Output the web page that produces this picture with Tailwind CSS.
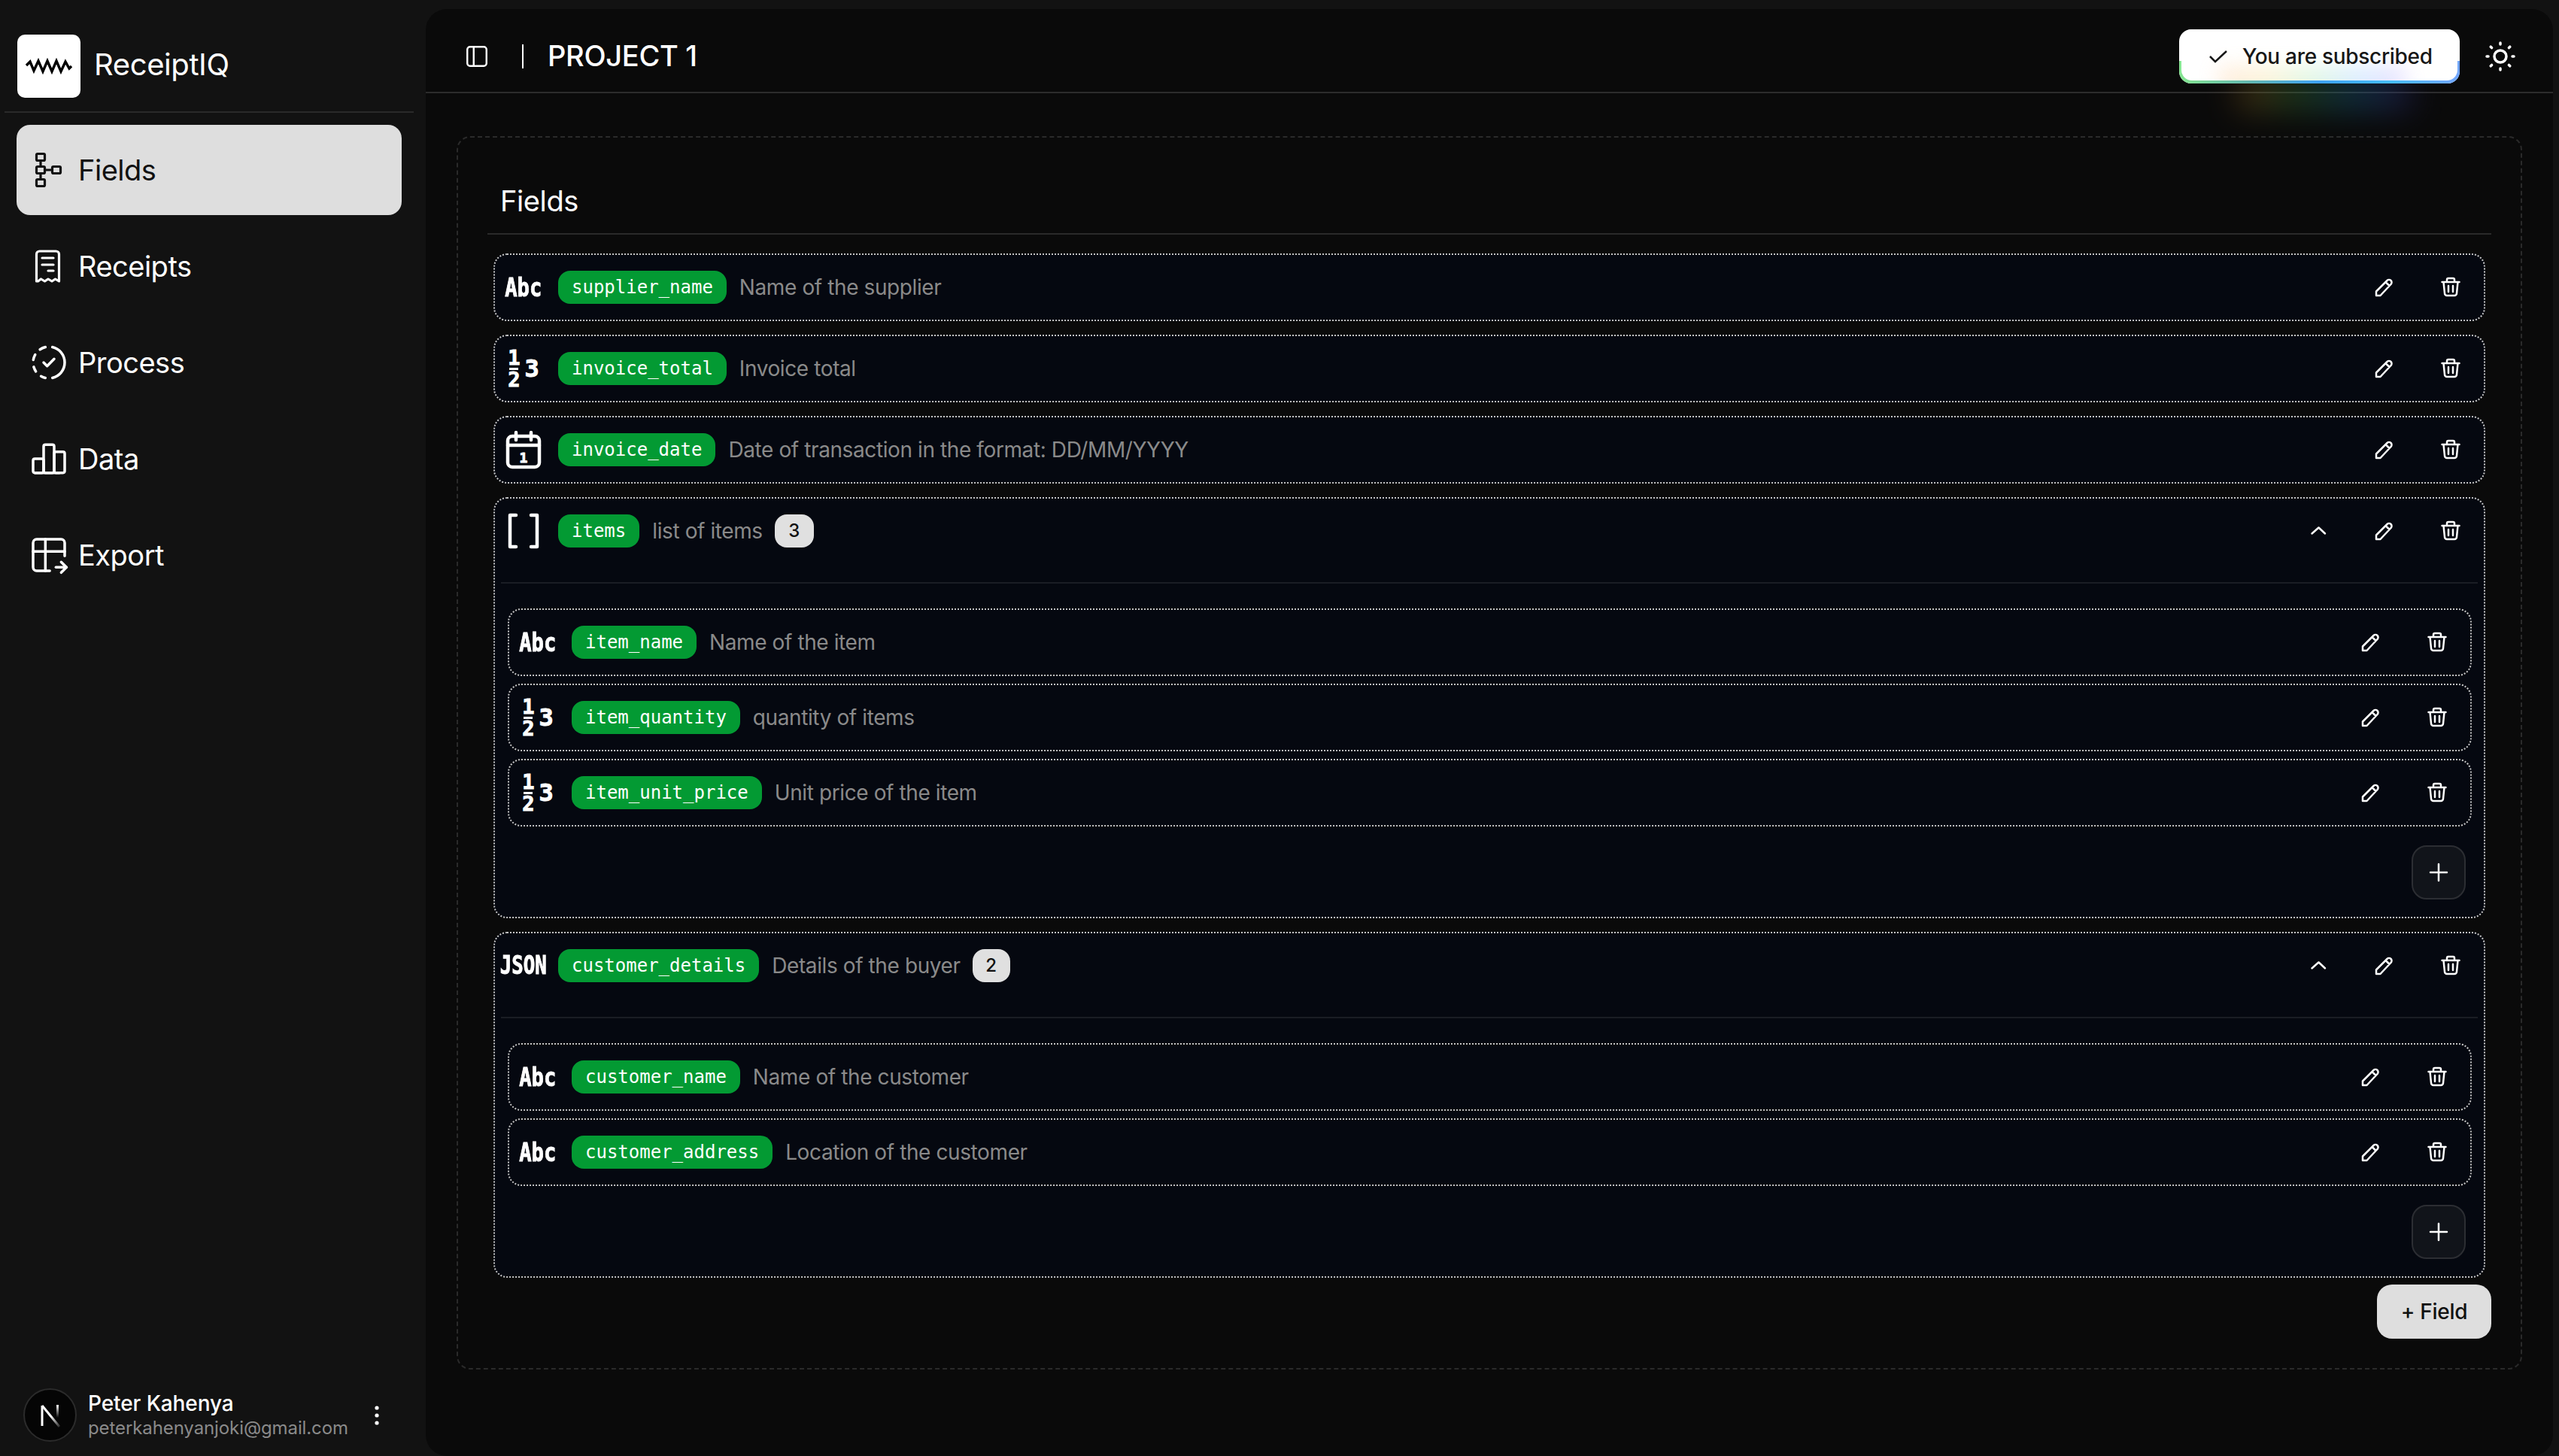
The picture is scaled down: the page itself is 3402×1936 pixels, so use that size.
<!DOCTYPE html>
<html lang="en">
<head>
<meta charset="UTF-8">
<meta name="viewport" content="width=device-width, initial-scale=1.0">
<title>ReceiptIQ</title>
<script src="https://cdn.jsdelivr.net/npm/@tailwindcss/browser@4"></script>
</head>
<body class="bg-[#121212] text-white font-['Inter',sans-serif] overflow-hidden">

<svg class="hidden">
  <symbol id="pencil" viewBox="0 0 32 32"><path d="M5 27v-5.500L19.500 7a3.400 3.400 0 0 1 5 5L10.500 27z M17.500 9l5 5" fill="none" stroke="currentColor" stroke-width="2.500" stroke-linejoin="round" stroke-linecap="round"/></symbol>
  <symbol id="trash" viewBox="0 0 32 32"><path d="M4.500 9h23 M11 9V6a2 2 0 0 1 2-2h6a2 2 0 0 1 2 2v3 M6.500 9 8 24a3 3 0 0 0 3 3h10a3 3 0 0 0 3-3l1.500-15 M13 14v8 M19 14v8" fill="none" stroke="currentColor" stroke-width="2.500" stroke-linejoin="round" stroke-linecap="round"/></symbol>
  <symbol id="chevron" viewBox="0 0 32 32"><path d="M7.500 19.500 16.500 11.500 25 19.500" fill="none" stroke="currentColor" stroke-width="2.500" stroke-linejoin="round" stroke-linecap="round"/></symbol>
  <symbol id="plus" viewBox="0 0 32 32"><path d="M16 5v22 M5 16h22" fill="none" stroke="currentColor" stroke-width="2.500" stroke-linecap="round"/></symbol>
</svg>

<div class="flex w-[3402px] h-[1936px]">

  <!-- sidebar -->
  <aside class="w-[566px] shrink-0 flex flex-col">
    <div class="h-[150px] mx-[6px] w-[544px] border-b-2 border-[#2a2a2a] flex items-start pt-[46px] pl-[17px] gap-[18px]">
      <div class="w-[84px] h-[84px] rounded-[10px] bg-white flex items-center justify-center">
        <svg width="62" height="22" viewBox="0 0 62 22"><path d="M1 10 6 5 11 17 17 4 23 18 29 4 35 18 41 4 47 18 53 5 58 14 61 11" fill="none" stroke="#000" stroke-width="3.400" stroke-linejoin="miter"/></svg>
      </div>
      <span class="text-[40px] leading-[80px] font-normal tracking-[-0.4px]">ReceiptIQ</span>
    </div>

    <nav class="mt-[16px] ml-[22px] w-[512px] flex flex-col gap-[8px] text-[38px] tracking-[-0.5px]">
      <a class="h-[120px] rounded-[18px] bg-[#dedede] text-[#111] flex items-center pl-[18px] gap-[16px]">
        <svg class="w-[48px] h-[48px] shrink-0" viewBox="0 0 48 48" fill="none" stroke="currentColor" stroke-width="3.200" stroke-linejoin="round">
          <rect x="8.500" y="2.500" width="11" height="9" rx="1.500"/><rect x="8.500" y="19.500" width="11" height="9" rx="1.500"/><rect x="8.500" y="36.500" width="11" height="9" rx="1.500"/><rect x="29.500" y="19.500" width="11" height="9" rx="1.500"/>
          <path d="M14 11.500v8 M14 28.500v8 M19.500 24h10"/>
        </svg>
        Fields
      </a>
      <a class="h-[120px] rounded-[18px] flex items-center pl-[18px] gap-[16px]">
        <svg class="w-[48px] h-[48px] shrink-0" viewBox="0 0 48 48" fill="none" stroke="currentColor" stroke-width="3.200" stroke-linejoin="round" stroke-linecap="round">
          <path d="M8.500 44V8a4 4 0 0 1 4-4h22a4 4 0 0 1 4 4v36l-5-3-4.500 3-5-3-4.500 3-5-3-4 3z"/>
          <path d="M16 13h15 M16 22h15 M24 30h7"/>
        </svg>
        Receipts
      </a>
      <a class="h-[120px] rounded-[18px] flex items-center pl-[18px] gap-[16px]">
        <svg class="w-[56px] h-[56px] -ml-[3px] -mr-[5px] shrink-0" viewBox="0 0 24 24" fill="none" stroke="currentColor" stroke-width="1.500" stroke-linejoin="round" stroke-linecap="round">
          <path d="M10 20.777a8.942 8.942 0 0 1 -2.480 -.969"/><path d="M14 3.223a9.003 9.003 0 0 1 0 17.554"/><path d="M4.579 17.093a8.961 8.961 0 0 1 -1.227 -2.592"/><path d="M3.124 10.500c.16 -.95 .468 -1.850 .9 -2.675l.169 -.305"/><path d="M6.907 4.579a8.954 8.954 0 0 1 3.093 -1.356"/><path d="M9 12l2 2l4 -4"/>
        </svg>
        Process
      </a>
      <a class="h-[120px] rounded-[18px] flex items-center pl-[18px] gap-[16px]">
        <svg class="w-[56px] h-[56px] -ml-[3px] -mr-[5px] shrink-0" viewBox="0 0 24 24" fill="none" stroke="currentColor" stroke-width="1.500" stroke-linejoin="round" stroke-linecap="round">
          <path d="M3 13a1 1 0 0 1 1 -1h4a1 1 0 0 1 1 1v6a1 1 0 0 1 -1 1h-4a1 1 0 0 1 -1 -1z"/><path d="M15 9a1 1 0 0 1 1 -1h4a1 1 0 0 1 1 1v10a1 1 0 0 1 -1 1h-4a1 1 0 0 1 -1 -1z"/><path d="M9 5a1 1 0 0 1 1 -1h4a1 1 0 0 1 1 1v14a1 1 0 0 1 -1 1h-4a1 1 0 0 1 -1 -1z"/><path d="M4 20h14"/>
        </svg>
        Data
      </a>
      <a class="h-[120px] rounded-[18px] flex items-center pl-[18px] gap-[16px]">
        <svg class="w-[56px] h-[56px] -ml-[3px] -mr-[5px] shrink-0" viewBox="0 0 24 24" fill="none" stroke="currentColor" stroke-width="1.500" stroke-linejoin="round" stroke-linecap="round">
          <path d="M12.500 21h-7.500a2 2 0 0 1 -2 -2v-14a2 2 0 0 1 2 -2h14a2 2 0 0 1 2 2v7.500"/><path d="M3 10h18"/><path d="M10 3v18"/><path d="M16 19h6"/><path d="M19 16l3 3l-3 3"/>
        </svg>
        Export
      </a>
    </nav>

    <div class="mt-auto mb-[19px] ml-[31px] flex items-center">
      <div class="w-[71px] h-[71px] rounded-full bg-[#050505] border-2 border-[#2b2b2b] flex items-center justify-center shrink-0">
        <svg width="30" height="32" viewBox="0 0 30 32" fill="none" stroke-width="3">
          <defs>
            <linearGradient id="fade1" x1="0" y1="0" x2="1" y2="1"><stop offset="0.5" stop-color="#fff"/><stop offset="1" stop-color="#fff" stop-opacity="0.15"/></linearGradient>
            <linearGradient id="fade2" x1="0" y1="0" x2="0" y2="1"><stop offset="0" stop-color="#fff"/><stop offset="1" stop-color="#fff" stop-opacity="0"/></linearGradient>
          </defs>
          <path d="M4 30V3" stroke="#fff"/>
          <path d="M4 3 27 31" stroke="url(#fade1)"/>
          <rect x="23" y="2" width="3" height="17" fill="url(#fade2)" stroke="none"/>
        </svg>
      </div>
      <div class="ml-[15px] w-[360px] tracking-[-0.1px]">
        <div class="text-[28px] leading-[34px] font-medium">Peter Kahenya</div>
        <div class="text-[24px] leading-[32px] text-[#8a8a8a]">peterkahenyanjoki@gmail.com</div>
      </div>
      <svg class="w-[32px] h-[32px] ml-[8px]" viewBox="0 0 32 32" fill="#fff"><circle cx="16" cy="6" r="2.600"/><circle cx="16" cy="16" r="2.600"/><circle cx="16" cy="26" r="2.600"/></svg>
    </div>
  </aside>

  <!-- main -->
  <main class="mt-[12px] mr-[8px] flex-1 h-[1924px] rounded-[28px] bg-[#0a0a0a] overflow-hidden flex flex-col">
    <header class="relative h-[112px] shrink-0 border-b-2 border-[#2c2c2c] flex items-center pt-[15px] pl-[51px] pr-[49px]">
      <!-- glow under the subscribe pill -->
      <div class="absolute right-[189px] top-[92px] w-[230px] h-[40px] blur-[22px] bg-[linear-gradient(90deg,#b06a1c,#3c8a3a,#1b78a8,#3b2f9a)] opacity-40"></div>
      <svg class="w-[34px] h-[34px] shrink-0" viewBox="0 0 24 24" fill="none" stroke="currentColor" stroke-width="1.700"><rect x="3" y="3" width="18" height="18" rx="2.500"/><path d="M9 3v18"/></svg>
      <span class="ml-[43px] w-[2px] h-[32px] bg-white"></span>
      <h1 class="ml-[32px] text-[38px] font-medium tracking-[-0.3px]">PROJECT 1</h1>

      <div class="relative ml-auto w-[373px] h-[72px] rounded-[16px] bg-white overflow-hidden text-[#171717]">
        <div class="absolute inset-x-0 bottom-0 h-[30px] bg-[linear-gradient(90deg,#86e691,#63b7b0,#3ea2f5,#46bdf8,#73a6ff)]"></div>
        <div class="absolute inset-x-[3px] top-0 bottom-[4px] rounded-[14px] bg-white overflow-hidden">
          <div class="absolute left-[50px] right-[70px] bottom-[-16px] h-[34px] blur-[14px] opacity-25 bg-[linear-gradient(90deg,#ffb070,#f5d060,#80e090,#60b0ff,#a080ff)]"></div>
        </div>
        <div class="relative h-full flex items-center pl-[36px] gap-[16px] text-[28px] font-medium tracking-[-0.3px]">
          <svg class="w-[32px] h-[32px] shrink-0" viewBox="0 0 32 32" fill="none" stroke="currentColor" stroke-width="2.500"><path d="M5 16l7 7L27 9"/></svg>
          You are subscribed
        </div>
      </div>
      <svg class="ml-[30px] w-[48px] h-[48px] shrink-0 -mr-[3px]" viewBox="0 0 24 24" fill="none" stroke="currentColor" stroke-width="1.750" stroke-linecap="round"><path d="M12 12m-4 0a4 4 0 1 0 8 0a4 4 0 1 0 -8 0"/><path d="M3 12h1m8 -9v1m8 8h1m-9 8v1m-6.400 -15.400l.7 .7m12.100 -.7l-.7 .7m0 11.400l.7 .7m-12.100 -.7l-.7 .7"/></svg>
    </header>

    <section class="mt-[57px] mx-[41px] h-[1640px] shrink-0 border-2 border-dashed border-[#2a2a2a] rounded-[18px] px-[39px]">
      <h2 class="pt-[60px] pb-[19px] text-[38px] leading-[48px] font-normal tracking-[-0.4px] pl-[17px] border-b-2 border-[#2a2a2a]">Fields</h2>

      <div class="mt-[25px] mx-[8px] flex flex-col gap-[18px]">

        <div class="h-[90px] rounded-[18px] bg-[#050810] border-2 border-dotted border-[#c4c4c4] flex items-center pr-[28px]">
          <div class="w-[76px] flex justify-center"><span class="font-['DejaVu_Sans_Mono',monospace] font-bold text-[34px] scale-x-[.8] [-webkit-text-stroke:1px_#fff]">Abc</span></div>
          <span class="ml-[8px] h-[44px] px-[18px] rounded-[16px] bg-[#039a33] font-['DejaVu_Sans_Mono',monospace] text-[24px] leading-[44px]">supplier_name</span>
          <span class="ml-[17px] text-[28px] tracking-[-0.4px] text-[#8a8a8a]">Name of the supplier</span>
          <div class="ml-auto flex gap-[56px]"><svg class="w-[32px] h-[32px]"><use href="#pencil"/></svg><svg class="w-[32px] h-[32px]"><use href="#trash"/></svg></div>
        </div>

        <div class="h-[90px] rounded-[18px] bg-[#050810] border-2 border-dotted border-[#c4c4c4] flex items-center pr-[28px]">
          <div class="w-[76px] flex justify-center items-center gap-[6px] font-['DejaVu_Sans_Mono',monospace] font-bold [-webkit-text-stroke:1px_#fff]">
            <div class="flex flex-col items-center text-[27px] leading-[20px]"><span>1</span><i class="w-[12px] h-[3px] bg-white my-[3px]"></i><span>2</span></div>
            <span class="text-[32px] leading-[28px]">3</span>
          </div>
          <span class="ml-[8px] h-[44px] px-[18px] rounded-[16px] bg-[#039a33] font-['DejaVu_Sans_Mono',monospace] text-[24px] leading-[44px]">invoice_total</span>
          <span class="ml-[17px] text-[28px] tracking-[-0.4px] text-[#8a8a8a]">Invoice total</span>
          <div class="ml-auto flex gap-[56px]"><svg class="w-[32px] h-[32px]"><use href="#pencil"/></svg><svg class="w-[32px] h-[32px]"><use href="#trash"/></svg></div>
        </div>

        <div class="h-[90px] rounded-[18px] bg-[#050810] border-2 border-dotted border-[#c4c4c4] flex items-center pr-[28px]">
          <div class="w-[76px] flex justify-center">
            <svg class="w-[48px] h-[52px]" viewBox="0 0 48 52" fill="none" stroke="#fff" stroke-width="4.500" stroke-linecap="round" stroke-linejoin="round">
              <rect x="3" y="8" width="42" height="41" rx="6"/><path d="M14 3v10 M34 3v10 M3 20h42"/>
              <text x="24" y="43" text-anchor="middle" fill="#fff" stroke="#fff" stroke-width="1" font-family="DejaVu Sans Mono" font-weight="700" font-size="18">1</text>
            </svg>
          </div>
          <span class="ml-[8px] h-[44px] px-[18px] rounded-[16px] bg-[#039a33] font-['DejaVu_Sans_Mono',monospace] text-[24px] leading-[44px]">invoice_date</span>
          <span class="ml-[17px] text-[28px] tracking-[-0.4px] text-[#8a8a8a]">Date of transaction in the format: DD/MM/YYYY</span>
          <div class="ml-auto flex gap-[56px]"><svg class="w-[32px] h-[32px]"><use href="#pencil"/></svg><svg class="w-[32px] h-[32px]"><use href="#trash"/></svg></div>
        </div>

        <!-- items group -->
        <div class="rounded-[18px] bg-[#050810] border-2 border-dotted border-[#c4c4c4]">
          <div class="h-[86px] flex items-center pr-[28px]">
            <div class="w-[76px] flex justify-center">
              <svg class="w-[44px] h-[48px]" viewBox="0 0 44 48" fill="none" stroke="#fff" stroke-width="4.500" stroke-linecap="round" stroke-linejoin="round"><path d="M12 3H4v42h8 M32 3h8v42h-8"/></svg>
            </div>
            <span class="ml-[8px] h-[44px] px-[18px] rounded-[16px] bg-[#039a33] font-['DejaVu_Sans_Mono',monospace] text-[24px] leading-[44px]">items</span>
            <span class="ml-[17px] text-[28px] tracking-[-0.4px] text-[#8a8a8a]">list of items</span>
            <span class="ml-[16px] w-[52px] h-[44px] rounded-[16px] bg-[#e0e0e0] text-[#111] text-[24px] font-medium leading-[44px] text-center">3</span>
            <div class="ml-auto flex gap-[56px]"><svg class="w-[32px] h-[32px]"><use href="#chevron"/></svg><svg class="w-[32px] h-[32px]"><use href="#pencil"/></svg><svg class="w-[32px] h-[32px]"><use href="#trash"/></svg></div>
          </div>
          <div class="mt-[25px] mx-[8px] h-[2px] bg-[#1a1d24]"></div>
          <div class="mt-[33px] mx-[17px] mr-[16px] flex flex-col gap-[10px]">
            <div class="h-[90px] rounded-[18px] border-2 border-dotted border-[#c4c4c4] flex items-center pr-[28px]">
              <div class="w-[76px] flex justify-center"><span class="font-['DejaVu_Sans_Mono',monospace] font-bold text-[34px] scale-x-[.8] [-webkit-text-stroke:1px_#fff]">Abc</span></div>
              <span class="ml-[7px] h-[44px] px-[18px] rounded-[16px] bg-[#039a33] font-['DejaVu_Sans_Mono',monospace] text-[24px] leading-[44px]">item_name</span>
              <span class="ml-[17px] text-[28px] tracking-[-0.4px] text-[#8a8a8a]">Name of the item</span>
              <div class="ml-auto flex gap-[56px]"><svg class="w-[32px] h-[32px]"><use href="#pencil"/></svg><svg class="w-[32px] h-[32px]"><use href="#trash"/></svg></div>
            </div>
            <div class="h-[90px] rounded-[18px] border-2 border-dotted border-[#c4c4c4] flex items-center pr-[28px]">
              <div class="w-[76px] flex justify-center items-center gap-[6px] font-['DejaVu_Sans_Mono',monospace] font-bold [-webkit-text-stroke:1px_#fff]">
                <div class="flex flex-col items-center text-[27px] leading-[20px]"><span>1</span><i class="w-[12px] h-[3px] bg-white my-[3px]"></i><span>2</span></div>
                <span class="text-[32px] leading-[28px]">3</span>
              </div>
              <span class="ml-[7px] h-[44px] px-[18px] rounded-[16px] bg-[#039a33] font-['DejaVu_Sans_Mono',monospace] text-[24px] leading-[44px]">item_quantity</span>
              <span class="ml-[17px] text-[28px] tracking-[-0.4px] text-[#8a8a8a]">quantity of items</span>
              <div class="ml-auto flex gap-[56px]"><svg class="w-[32px] h-[32px]"><use href="#pencil"/></svg><svg class="w-[32px] h-[32px]"><use href="#trash"/></svg></div>
            </div>
            <div class="h-[90px] rounded-[18px] border-2 border-dotted border-[#c4c4c4] flex items-center pr-[28px]">
              <div class="w-[76px] flex justify-center items-center gap-[6px] font-['DejaVu_Sans_Mono',monospace] font-bold [-webkit-text-stroke:1px_#fff]">
                <div class="flex flex-col items-center text-[27px] leading-[20px]"><span>1</span><i class="w-[12px] h-[3px] bg-white my-[3px]"></i><span>2</span></div>
                <span class="text-[32px] leading-[28px]">3</span>
              </div>
              <span class="ml-[7px] h-[44px] px-[18px] rounded-[16px] bg-[#039a33] font-['DejaVu_Sans_Mono',monospace] text-[24px] leading-[44px]">item_unit_price</span>
              <span class="ml-[17px] text-[28px] tracking-[-0.4px] text-[#8a8a8a]">Unit price of the item</span>
              <div class="ml-auto flex gap-[56px]"><svg class="w-[32px] h-[32px]"><use href="#pencil"/></svg><svg class="w-[32px] h-[32px]"><use href="#trash"/></svg></div>
            </div>
          </div>
          <div class="mt-[25px] mb-[23px] mr-[24px] flex justify-end">
            <button class="w-[72px] h-[72px] rounded-[20px] border-2 border-[#2c2e33] bg-[#11141a] flex items-center justify-center"><svg class="w-[32px] h-[32px]"><use href="#plus"/></svg></button>
          </div>
        </div>

        <!-- customer_details group -->
        <div class="rounded-[18px] bg-[#050810] border-2 border-dotted border-[#c4c4c4]">
          <div class="h-[86px] flex items-center pr-[28px]">
            <div class="w-[76px] flex justify-center"><span class="font-['DejaVu_Sans_Mono',monospace] font-bold text-[33px] scale-x-[.78] [-webkit-text-stroke:1px_#fff]">JSON</span></div>
            <span class="ml-[8px] h-[44px] px-[18px] rounded-[16px] bg-[#039a33] font-['DejaVu_Sans_Mono',monospace] text-[24px] leading-[44px]">customer_details</span>
            <span class="ml-[17px] text-[28px] tracking-[-0.4px] text-[#8a8a8a]">Details of the buyer</span>
            <span class="ml-[16px] w-[50px] h-[44px] rounded-[16px] bg-[#e0e0e0] text-[#111] text-[24px] font-medium leading-[44px] text-center">2</span>
            <div class="ml-auto flex gap-[56px]"><svg class="w-[32px] h-[32px]"><use href="#chevron"/></svg><svg class="w-[32px] h-[32px]"><use href="#pencil"/></svg><svg class="w-[32px] h-[32px]"><use href="#trash"/></svg></div>
          </div>
          <div class="mt-[25px] mx-[8px] h-[2px] bg-[#1a1d24]"></div>
          <div class="mt-[33px] mx-[17px] mr-[16px] flex flex-col gap-[10px]">
            <div class="h-[90px] rounded-[18px] border-2 border-dotted border-[#c4c4c4] flex items-center pr-[28px]">
              <div class="w-[76px] flex justify-center"><span class="font-['DejaVu_Sans_Mono',monospace] font-bold text-[34px] scale-x-[.8] [-webkit-text-stroke:1px_#fff]">Abc</span></div>
              <span class="ml-[7px] h-[44px] px-[18px] rounded-[16px] bg-[#039a33] font-['DejaVu_Sans_Mono',monospace] text-[24px] leading-[44px]">customer_name</span>
              <span class="ml-[17px] text-[28px] tracking-[-0.4px] text-[#8a8a8a]">Name of the customer</span>
              <div class="ml-auto flex gap-[56px]"><svg class="w-[32px] h-[32px]"><use href="#pencil"/></svg><svg class="w-[32px] h-[32px]"><use href="#trash"/></svg></div>
            </div>
            <div class="h-[90px] rounded-[18px] border-2 border-dotted border-[#c4c4c4] flex items-center pr-[28px]">
              <div class="w-[76px] flex justify-center"><span class="font-['DejaVu_Sans_Mono',monospace] font-bold text-[34px] scale-x-[.8] [-webkit-text-stroke:1px_#fff]">Abc</span></div>
              <span class="ml-[7px] h-[44px] px-[18px] rounded-[16px] bg-[#039a33] font-['DejaVu_Sans_Mono',monospace] text-[24px] leading-[44px]">customer_address</span>
              <span class="ml-[17px] text-[28px] tracking-[-0.4px] text-[#8a8a8a]">Location of the customer</span>
              <div class="ml-auto flex gap-[56px]"><svg class="w-[32px] h-[32px]"><use href="#pencil"/></svg><svg class="w-[32px] h-[32px]"><use href="#trash"/></svg></div>
            </div>
          </div>
          <div class="mt-[25px] mb-[23px] mr-[24px] flex justify-end">
            <button class="w-[72px] h-[72px] rounded-[20px] border-2 border-[#2c2e33] bg-[#11141a] flex items-center justify-center"><svg class="w-[32px] h-[32px]"><use href="#plus"/></svg></button>
          </div>
        </div>

      </div>

      <div class="mt-[9px] flex justify-end">
        <button class="w-[152px] h-[72px] rounded-[20px] bg-[#dedede] text-[#111] text-[28px] font-medium tracking-[-0.3px]">+ Field</button>
      </div>
    </section>
  </main>
</div>
</body>
</html>
